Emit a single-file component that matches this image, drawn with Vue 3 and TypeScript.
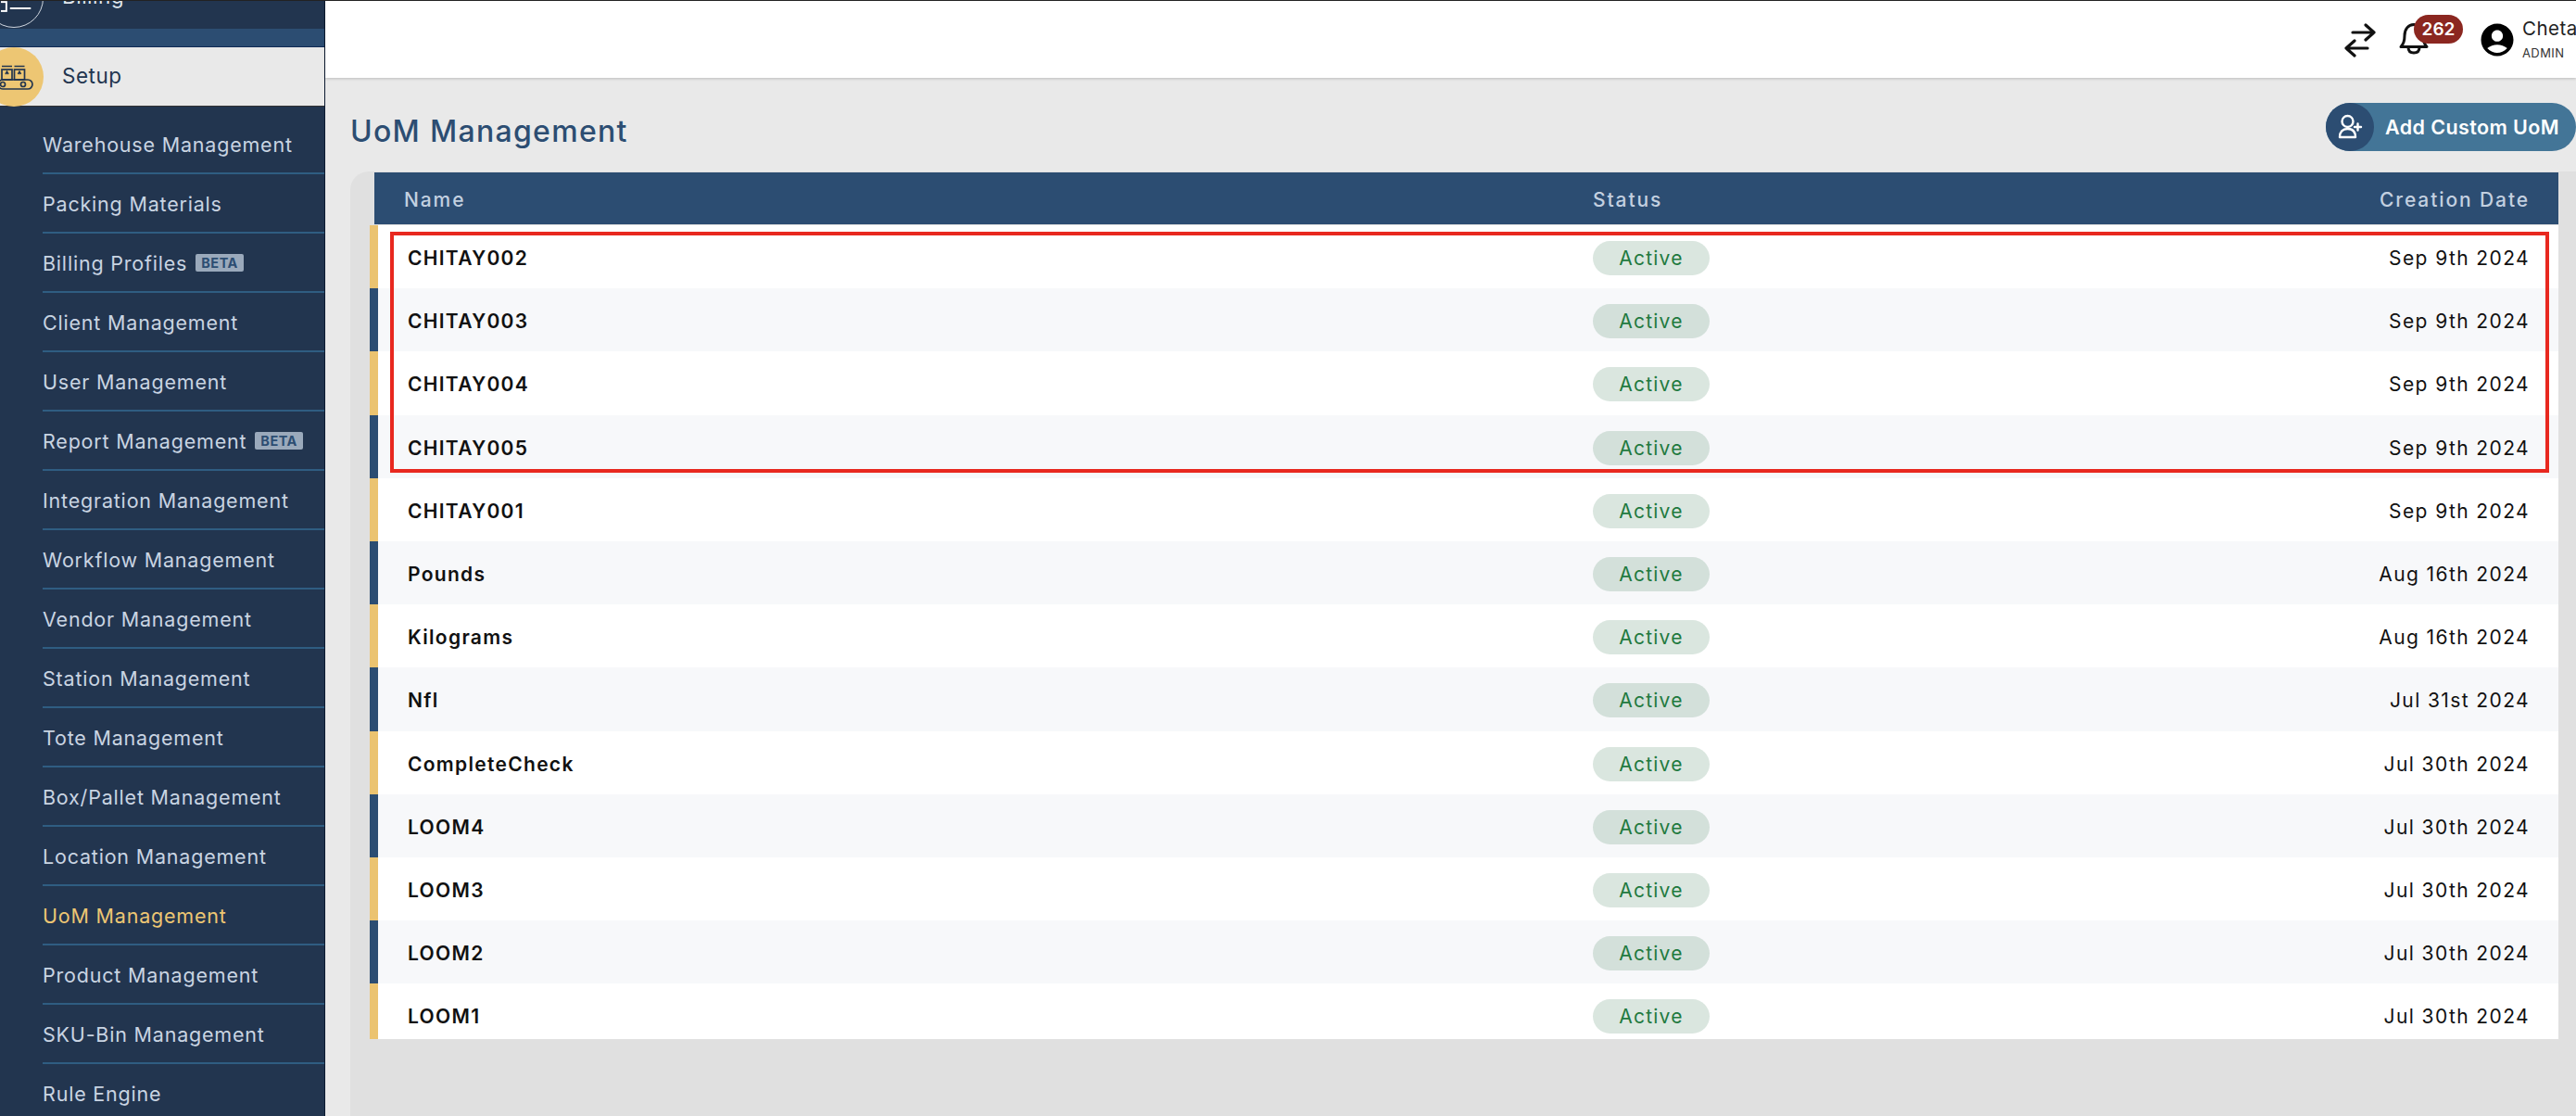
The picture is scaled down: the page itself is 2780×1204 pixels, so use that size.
<script setup lang="ts">
const nav: { label: string; beta?: boolean; active?: boolean }[] = [
  { label: 'Warehouse Management' },
  { label: 'Packing Materials' },
  { label: 'Billing Profiles', beta: true },
  { label: 'Client Management' },
  { label: 'User Management' },
  { label: 'Report Management', beta: true },
  { label: 'Integration Management' },
  { label: 'Workflow Management' },
  { label: 'Vendor Management' },
  { label: 'Station Management' },
  { label: 'Tote Management' },
  { label: 'Box/Pallet Management' },
  { label: 'Location Management' },
  { label: 'UoM Management', active: true },
  { label: 'Product Management' },
  { label: 'SKU-Bin Management' },
  { label: 'Rule Engine' },
]
const rows: [string, string][] = [
  ['CHITAY002', 'Sep 9th 2024'],
  ['CHITAY003', 'Sep 9th 2024'],
  ['CHITAY004', 'Sep 9th 2024'],
  ['CHITAY005', 'Sep 9th 2024'],
  ['CHITAY001', 'Sep 9th 2024'],
  ['Pounds', 'Aug 16th 2024'],
  ['Kilograms', 'Aug 16th 2024'],
  ['Nfl', 'Jul 31st 2024'],
  ['CompleteCheck', 'Jul 30th 2024'],
  ['LOOM4', 'Jul 30th 2024'],
  ['LOOM3', 'Jul 30th 2024'],
  ['LOOM2', 'Jul 30th 2024'],
  ['LOOM1', 'Jul 30th 2024'],
]
</script>

<template>
  <div class="app">
    <aside class="sidebar">
      <div class="billing">
        <span class="billing-circle">
          <svg width="46" height="14" viewBox="0 0 46 14" fill="none" stroke="#fff" stroke-width="2"><rect x="-4" y="1" width="10" height="10"/><path d="M10 8h23"/></svg>
        </span>
        <span class="billing-label">Billing</span>
      </div>
      <div class="strip"></div>
      <div class="setup">
        <span class="setup-circle">
          <svg width="40" height="28" viewBox="0 0 40 28" fill="none" stroke="#22354f" stroke-width="1.7">
            <rect x="3" y="6" width="11" height="11"/><rect x="16.500" y="6" width="11" height="11"/>
            <path d="M3 2.500h11M16.500 2.500h11M7 11l1.500-2.500L10 11M20.500 11l1.500-2.500 1.500 2.500"/>
            <rect x="-1" y="17" width="37" height="10" rx="5"/>
            <circle cx="4" cy="22" r="2.500"/><circle cx="26" cy="22" r="2.500"/>
          </svg>
        </span>
        <span class="setup-label">Setup</span>
      </div>
      <nav class="nav">
        <div v-for="item in nav" :key="item.label" class="nav-item" :class="{ active: item.active }">
          <span>{{ item.label }}</span>
          <span v-if="item.beta" class="beta">BETA</span>
        </div>
      </nav>
    </aside>

    <div class="main">
      <header class="topbar">
        <svg class="swap" width="36" height="38" viewBox="0 0 36 38" fill="none" stroke="#111" stroke-width="3.200" stroke-linecap="round" stroke-linejoin="round">
          <path d="M10 11h23M24 3l9 8-9 8"/>
          <path d="M26 28H3M12 20l-9 8 9 8"/>
        </svg>
        <div class="bell-wrap">
          <svg width="34" height="36" viewBox="0 0 34 36" fill="none" stroke="#111" stroke-width="3" stroke-linejoin="round" stroke-linecap="round">
            <path d="M3 27.500c3-3 4-6 4-12 0-7 4-12 10-12s10 5 10 12c0 6 1 9 4 12z"/>
            <path d="M11 28c0 4 2.500 6 6 6s6-2 6-6"/>
          </svg>
          <span class="badge">262</span>
        </div>
        <svg class="user-ico" width="42" height="42" viewBox="0 0 24 24" fill="#000"><path d="M12 2C6.48 2 2 6.48 2 12s4.48 10 10 10 10-4.48 10-10S17.52 2 12 2zm0 4c1.93 0 3.5 1.57 3.500 3.500S13.930 13 12 13s-3.500-1.570-3.500-3.500S10.070 6 12 6zm0 14c-2.030 0-4.430-.82-6.140-2.880C7.550 15.800 9.680 15 12 15s4.450.8 6.140 2.120C16.430 19.180 14.030 20 12 20z"/></svg>
        <div class="user">
          <div class="user-name">Chetan</div>
          <div class="user-role">ADMIN</div>
        </div>
      </header>

      <div class="content">
        <div class="title-row">
          <h1 class="title">UoM Management</h1>
          <button class="add">
            <span class="add-ico">
              <svg width="30" height="30" viewBox="0 0 30 30" fill="none" stroke="#fff" stroke-width="2.400" stroke-linejoin="round" stroke-linecap="round">
                <circle cx="12.500" cy="9" r="6"/>
                <path d="M4 26c0-6 3-9 8.500-9s8.500 3 8.500 9z"/>
                <path d="M20 15h7M23.500 11.500v7"/>
              </svg>
            </span>
            <span>Add Custom UoM</span>
          </button>
        </div>

        <section class="panel">
          <div class="thead">
            <span class="c-name">Name</span>
            <span class="c-status">Status</span>
            <span class="c-date">Creation Date</span>
          </div>
          <div class="tbody">
            <div v-for="(r, i) in rows" :key="r[0]" class="row" :class="i % 2 ? 'even' : 'odd'">
              <span class="c-name name">{{ r[0] }}</span>
              <span class="c-status"><span class="pill">Active</span></span>
              <span class="c-date date">{{ r[1] }}</span>
            </div>
            <div class="highlight"></div>
          </div>
        </section>
      </div>
    </div>
  </div>
</template>

<style>
html, body { margin: 0; background: #e9e9e9; overflow: hidden; }
</style>

<style scoped>
.app {
  width: 2780px;
  height: 1204px;
  display: flex;
  overflow: hidden;
  font-family: Inter, "Liberation Sans", sans-serif;
  box-sizing: border-box;
  border-top: 1px solid #222;
}
.sidebar {
  width: 351px;
  flex: none;
  background: #22354f;
  border-right: 1px solid #0c1a30;
  box-sizing: border-box;
  overflow: hidden;
}
.billing {
  height: 30px;
  display: flex;
  position: relative;
  overflow: hidden;
}
.billing-circle {
  position: absolute;
  left: -17px;
  top: -35px;
  width: 64px;
  height: 64px;
  border-radius: 50%;
  border: 1.500px solid #cfd6df;
  display: flex;
  align-items: flex-end;
  justify-content: flex-start;
  padding: 0 0 14px 17px;
  box-sizing: border-box;
  overflow: hidden;
}
.billing-label {
  margin: -20px 0 0 67px;
  font-size: 22.500px;
  line-height: 30px;
  color: #dfe5ec;
  letter-spacing: 0.500px;
}
.strip { height: 19px; background: #2c4d72; border-bottom: 1px solid #0f2a55; }
.setup {
  height: 64px;
  background: #e9e9e9;
  border-bottom: 1px solid #333;
  display: flex;
  align-items: center;
  position: relative;
  box-sizing: border-box;
}
.setup-circle {
  position: absolute;
  left: -17px;
  top: 0;
  width: 64px;
  height: 64px;
  border-radius: 50%;
  background: #edc673;
  overflow: hidden;
  display: flex;
  align-items: center;
  padding-left: 16px;
  box-sizing: border-box;
}
.setup-label {
  margin: 0 0 3px 67px;
  font-size: 22.500px;
  color: #22354f;
  letter-spacing: 0.500px;
}
.nav { margin: 9px 0 0 46px; }
.nav-item {
  height: 64px;
  box-sizing: border-box;
  border-bottom: 2px solid #2f5d82;
  padding-top: 1px;
  display: flex;
  align-items: center;
  gap: 9px;
  font-size: 21.500px;
  color: #c9d4e2;
  letter-spacing: 0.800px;
  white-space: nowrap;
}
.nav-item.active { color: #edc673; }
.beta {
  background: #9aa9bb;
  color: #2c4d72;
  font-size: 14.500px;
  font-weight: 700;
  line-height: 19px;
  padding: 0 6px;
  border-radius: 2px;
  letter-spacing: 0.500px;
}
.main { flex: 1; min-width: 0; display: flex; flex-direction: column; }
.topbar {
  height: 83px;
  flex: none;
  background: #fff;
  box-shadow: 0 1px 3px rgba(0, 0, 0, 0.2);
  display: flex;
  align-items: center;
  box-sizing: border-box;
  padding-left: 2178px;
  position: relative;
  z-index: 1;
}
.swap { flex: none; }
.bell-wrap { position: relative; margin: 0 0 3px 23px; width: 34px; height: 36px; flex: none; }
.badge {
  position: absolute;
  left: 17px;
  top: -7px;
  width: 53px;
  height: 31px;
  border-radius: 16px;
  background: #8b2720;
  color: #fff;
  font-size: 19px;
  font-weight: 600;
  line-height: 31px;
  text-align: center;
}
.user-ico { margin-left: 52px; flex: none; }
.user { margin-left: 6px; white-space: nowrap; }
.user-name { font-size: 20.500px; color: #222; line-height: 28px; letter-spacing: 0.500px; }
.user-role { font-size: 13px; color: #333; line-height: 24px; letter-spacing: 0.400px; }
.content { flex: 1; min-height: 0; display: flex; flex-direction: column; padding-left: 27px; }
.title-row { display: flex; justify-content: space-between; align-items: flex-start; height: 101px; flex: none; }
.title {
  margin: 38px 0 0;
  font-size: 32px;
  font-weight: 500;
  color: #2c4d72;
  line-height: 40px;
  letter-spacing: 1.300px;
}
.add {
  margin-top: 27px;
  width: 270px;
  height: 52px;
  padding: 0;
  border: 0;
  border-radius: 26px;
  background: #437597;
  color: #fff;
  font: inherit;
  font-size: 21.500px;
  font-weight: 600;
  letter-spacing: 0.400px;
  display: flex;
  align-items: center;
  gap: 12px;
  white-space: nowrap;
}
.add-ico {
  width: 52px;
  height: 52px;
  border-radius: 50%;
  background: #2c4d72;
  display: flex;
  align-items: center;
  justify-content: center;
}
.panel {
  flex: 1;
  background: #e0e0e0;
  border-radius: 20px 0 0 0;
  padding: 1px 19px 0 26px;
}
.thead {
  height: 56px;
  background: #2c4d72;
  color: #c3d0e0;
  display: grid;
  grid-template-columns: 1283px 1fr auto;
  align-items: center;
  padding: 2px 31px 0 32px;
  box-sizing: border-box;
  font-size: 21px;
  font-weight: 500;
  letter-spacing: 1.900px;
}
.tbody {
  position: relative;
  height: 878px;
  margin-top: 1px;
  margin-left: -5px;
  overflow: hidden;
}
.row {
  height: 68.200px;
  box-sizing: border-box;
  border-left: 9px solid;
  display: grid;
  grid-template-columns: 1279px 1fr auto;
  align-items: center;
  padding: 3px 31px 0 32px;
  color: #111;
}
.row.odd { background: #fff; border-left-color: #ebc370; }
.row.even { background: #f7f8fa; border-left-color: #2c4d72; }
.name { font-size: 21px; font-weight: 600; letter-spacing: 1.300px; }
.pill {
  display: inline-block;
  width: 126px;
  height: 37px;
  border-radius: 19px;
  background: rgba(25, 100, 55, 0.16);
  color: #1f7a3f;
  font-size: 21px;
  line-height: 37px;
  text-align: center;
  letter-spacing: 1.200px;
}
.date { font-size: 21px; letter-spacing: 1.400px; }
.highlight {
  position: absolute;
  left: 22px;
  top: 7px;
  width: 2330px;
  height: 260px;
  box-sizing: border-box;
  border: 4px solid #e8281f;
  pointer-events: none;
}
</style>
